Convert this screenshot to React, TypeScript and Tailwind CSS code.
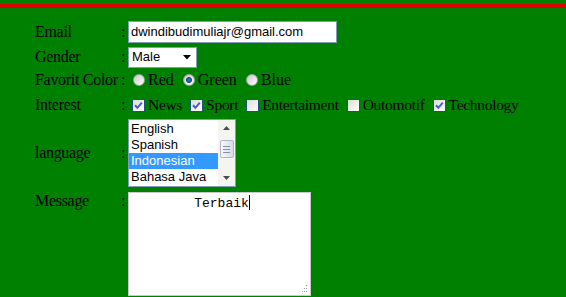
import React from "react";

const Check = ({ on }: { on: boolean }) => (
  <span className="inline-flex w-[13px] h-[13px] ml-[4px] mr-[3px] border border-[#1c5180] bg-gradient-to-br from-[#dcdcd7] to-[#ffffff] items-center justify-center">
    {on && (
      <svg width="9" height="9" viewBox="0 0 9 9">
        <path d="M1 4.2 L3.4 6.8 L7.8 1.6" stroke="#4a5fc8" strokeWidth="2" fill="none" />
      </svg>
    )}
  </span>
);

const Radio = ({ on }: { on: boolean }) => (
  <span className="inline-flex w-[12px] h-[12px] ml-[5px] mr-[3px] rounded-full border border-[#a0a0a0] bg-gradient-to-br from-[#c8c8c8] to-[#ffffff] items-center justify-center">
    {on && <span className="w-[6px] h-[6px] rounded-full bg-[#1c6fb5] border border-[#0b3c70]" />}
  </span>
);

const Row = ({ label, children, className }: { label: string; children: React.ReactNode; className: string }) => (
  <div className={"flex " + className}>
    <div className="w-[86px] shrink-0 whitespace-nowrap tracking-[-0.3px]">{label}</div>
    <div className="w-[4px] shrink-0">:</div>
    <div className="ml-[3px] flex items-center">{children}</div>
  </div>
);

export default function App() {
  const langs = ["English", "Spanish", "Indonesian", "Bahasa Java"];
  return (
    <div className="w-[566px] h-[297px] overflow-hidden bg-[#008000] text-black text-[16px] font-['Liberation_Serif',serif]">
      <div className="h-[4px] mt-[4px] bg-[#e00000]" />
      <div className="pl-[35px] pt-[13px]">
        <Row label="Email" className="items-center h-[22px]">
          <div className="w-[209px] h-[22px] bg-white border border-[#7f9db9] px-[2px] text-[13px] leading-[20px] font-['Liberation_Sans',sans-serif]">
            dwindibudimuliajr@gmail.com
          </div>
        </Row>
        <Row label="Gender" className="items-center h-[22px] mt-[3px]">
          <div className="w-[69px] h-[21px] bg-white border border-[#7f9db9] flex items-center justify-between pl-[3px] pr-[5px] text-[13px] font-['Liberation_Sans',sans-serif]">
            <span>Male</span>
            <svg width="8" height="5" viewBox="0 0 8 5"><path d="M0 0 H8 L4 4.5 Z" fill="#000" /></svg>
          </div>
        </Row>
        <Row label="Favorit Color" className="items-center h-[24px]">
          <div className="flex items-center">
            <Radio on={false} />
            <span>Red</span>
            <span className="w-[4px]" />
            <Radio on={true} />
            <span>Green</span>
            <span className="w-[4px]" />
            <Radio on={false} />
            <span>Blue</span>
          </div>
        </Row>
        <Row label="Interest" className="items-center h-[24px] mt-[1px]">
          <div className="flex items-center text-[15.5px] tracking-[-0.3px]">
            <Check on={true} />
            <span>News</span>
            <span className="w-[4px]" />
            <Check on={true} />
            <span>Sport</span>
            <span className="w-[4px]" />
            <Check on={false} />
            <span>Entertaiment</span>
            <span className="w-[4px]" />
            <Check on={false} />
            <span>Outomotif</span>
            <span className="w-[4px]" />
            <Check on={true} />
            <span>Technology</span>
          </div>
        </Row>
        <Row label="language" className="items-center h-[68px] mt-[2px]">
          <div className="w-[108px] h-[68px] bg-white border border-[#7f9db9] flex text-[13px] font-['Liberation_Sans',sans-serif]">
            <div className="flex-1 pt-[1px]">
              {langs.map((l) => (
                <div key={l} className={"h-[16px] leading-[16px] pl-[2px] " + (l === "Indonesian" ? "bg-[#3399ff] text-white" : "")}>
                  {l}
                </div>
              ))}
            </div>
            <div className="w-[17px] bg-[#f4f4f0] flex flex-col items-center justify-between">
              <div className="h-[16px] flex items-center justify-center">
                <svg width="7" height="4" viewBox="0 0 7 4"><path d="M0 4 H7 L3.5 0 Z" fill="#4d4d4d" /></svg>
              </div>
              <div className="w-[14px] h-[18px] -mt-[8px] rounded-[2px] border border-[#b0b8c8] bg-gradient-to-r from-[#f8f8f8] to-[#d8dce8] flex flex-col items-center justify-center gap-[2px]">
                <span className="w-[7px] h-[1px] bg-[#8090a8]" />
                <span className="w-[7px] h-[1px] bg-[#8090a8]" />
                <span className="w-[7px] h-[1px] bg-[#8090a8]" />
              </div>
              <div className="h-[16px] flex items-center justify-center">
                <svg width="7" height="4" viewBox="0 0 7 4"><path d="M0 0 H7 L3.5 4 Z" fill="#4d4d4d" /></svg>
              </div>
            </div>
          </div>
        </Row>
        <Row label="Message" className="items-start mt-[5px] leading-[18px]">
          <div className="relative w-[183px] h-[104px] bg-white border border-[#c8c8c8] text-center pt-[2px] pl-[5px] text-[13px] font-['Liberation_Mono',monospace]">
            <span>Terbaik</span>
            <span className="inline-block w-[1px] h-[15px] bg-black align-middle -mt-[2px]" />
            <svg className="absolute right-[2px] bottom-[2px]" width="8" height="8" viewBox="0 0 8 8">
              <rect x="6" y="0" width="1" height="1" fill="#999" />
              <rect x="4" y="3" width="1" height="1" fill="#999" />
              <rect x="6" y="3" width="1" height="1" fill="#999" />
              <rect x="2" y="6" width="1" height="1" fill="#999" />
              <rect x="4" y="6" width="1" height="1" fill="#999" />
              <rect x="6" y="6" width="1" height="1" fill="#999" />
            </svg>
          </div>
        </Row>
      </div>
    </div>
  );
}
